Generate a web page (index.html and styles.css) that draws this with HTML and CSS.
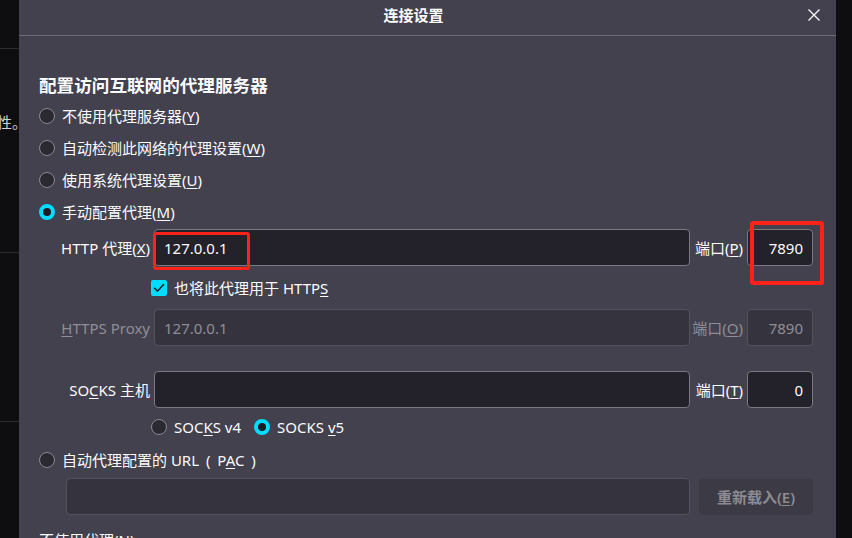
FILE: index.html
```html
<!DOCTYPE html>
<html lang="zh-CN">
<head>
<meta charset="utf-8">
<title>连接设置</title>
<link rel="stylesheet" href="styles.css">
</head>
<body>
<div class="page">
  <aside class="side side-left">
    <div class="seg seg-1"></div>
    <div class="seg seg-2"><span class="frag">保护您的隐私和安全性<span class="stop">。</span></span></div>
    <div class="seg seg-3"></div>
    <div class="seg seg-4"></div>
  </aside>

  <section class="dialog">
    <header class="dlg-head">
      <div class="dlg-title">连接设置</div>
      <div class="dlg-close">
        <svg width="12" height="12" viewBox="0 0 12 12"><path d="M0.5 0.5 L11.5 11.5 M11.5 0.5 L0.5 11.5" stroke="#fbfbfe" stroke-width="1.3" fill="none"/></svg>
      </div>
    </header>

    <main class="content">
      <h2 class="heading">配置访问互联网的代理服务器</h2>

      <div class="radio-row"><span class="radio"></span><span>不使用代理服务器(<u>Y</u>)</span></div>
      <div class="radio-row"><span class="radio"></span><span>自动检测此网络的代理设置(<u>W</u>)</span></div>
      <div class="radio-row"><span class="radio"></span><span>使用系统代理设置(<u>U</u>)</span></div>
      <div class="radio-row"><span class="radio checked"></span><span>手动配置代理(<u>M</u>)</span></div>

      <div class="frow frow-http">
        <span class="flabel">HTTP 代理(<u>X</u>)</span>
        <div class="field main-field"><span class="val">127.0.0.1</span></div>
        <span class="plabel">端口(<u>P</u>)</span>
        <div class="field port-field"><span class="val">7890</span></div>
      </div>

      <div class="check-row"><span class="checkbox"><svg width="16" height="16" viewBox="0 0 16 16"><path d="M3.6 8.2 L6.6 11.1 L12.6 4.6" stroke="#1c1b22" stroke-width="1.5" fill="none" stroke-linecap="round" stroke-linejoin="round"/></svg></span><span>也将此代理用于 HTTP<u>S</u></span></div>

      <div class="frow disabled">
        <span class="flabel"><u>H</u>TTPS Proxy</span>
        <div class="field main-field"><span class="val">127.0.0.1</span></div>
        <span class="plabel">端口(<u>O</u>)</span>
        <div class="field port-field"><span class="val">7890</span></div>
      </div>

      <div class="frow frow-socks">
        <span class="flabel">SO<u>C</u>KS 主机</span>
        <div class="field main-field"></div>
        <span class="plabel">端口(<u>T</u>)</span>
        <div class="field port-field"><span class="val">0</span></div>
      </div>

      <div class="ver-row">
        <span class="ver-opt"><span class="radio"></span><span>SOC<u>K</u>S v4</span></span>
        <span class="ver-opt"><span class="radio checked"></span><span>SOCKS <u>v</u>5</span></span>
      </div>

      <div class="radio-row pac-radio"><span class="radio"></span><span>自动代理配置的 <span class="pac-text">URL ( P<u>A</u>C )</span></span></div>

      <div class="pac-row disabled">
        <div class="field pac-field"></div>
        <div class="btn">重新载入(<u>E</u>)</div>
      </div>

      <div class="noproxy">不使用代理(<u>N</u>)</div>
    </main>
  </section>

  <aside class="side side-right"></aside>

  <div class="mark mark-1"></div>
  <div class="mark mark-2"></div>
</div>
</body>
</html>
```

FILE: styles.css
```css
* { box-sizing: border-box; }

html, body {
  margin: 0;
  padding: 0;
  background: #0e0e10;
}

body {
  font-family: "Noto Sans", "Noto Sans CJK SC", sans-serif;
  font-size: 15px;
  color: #fbfbfe;
}

u {
  text-decoration-thickness: 1px;
  text-underline-offset: 2px;
}

.page {
  position: relative;
  display: flex;
  width: 852px;
  height: 538px;
  overflow: hidden;
}

/* side strips */
.side {
  background: #0e0e10;
  flex: none;
  overflow: hidden;
}
.side-left { width: 19px; }
.side-right { width: 16px; }

.seg { border-bottom: 1px solid #2c2b31; }
.seg-1 { height: 49px; }
.seg-2 {
  height: 204px;
  display: flex;
  justify-content: flex-end;
  padding-top: 63px;
  padding-right: 1px;
  white-space: nowrap;
  color: #cfcfd6;
  line-height: 20px;
}
.stop {
  display: inline-block;
  width: 6px;
  overflow: visible;
}
.seg-3 { height: 169px; }
.seg-4 { border-bottom: 0; }

/* dialog */
.dialog {
  flex: 1;
  background: #42414d;
  display: flex;
  flex-direction: column;
}

.dlg-head {
  height: 36px;
  flex: none;
  display: flex;
  align-items: center;
  border-bottom: 1px solid #6e6d77;
  padding-bottom: 5px;
}
.dlg-title {
  flex: 1;
  text-align: center;
  font-weight: 600;
  font-size: 15px;
  line-height: 20px;
}
.dlg-close {
  width: 28px;
  flex: none;
  display: flex;
}

.content {
  padding: 37px 23px 0 20px;
}

.heading {
  margin: 0 0 3px;
  font-size: 17.6px;
  font-weight: 600;
  line-height: 24px;
}

.radio-row {
  height: 32px;
  display: flex;
  align-items: center;
  gap: 7px;
  line-height: 20px;
}

.radio {
  width: 16px;
  height: 16px;
  flex: none;
  border-radius: 50%;
  border: 1.5px solid #8b8a93;
  background: #2b2a33;
}
.radio.checked {
  border: 4.5px solid #00ddff;
  background: #1c1b22;
}

.pac-text { word-spacing: 3px; }

/* form rows */
.frow {
  display: grid;
  grid-template-columns: 111px 1fr 57px 66px;
  align-items: center;
  height: 37px;
  line-height: 20px;
}
.frow-http { margin-top: 1px; }
.frow-socks { margin-top: 25px; }

.flabel {
  text-align: right;
  white-space: nowrap;
}
.plabel {
  text-align: right;
  padding-right: 4px;
  white-space: nowrap;
}

.field {
  height: 37px;
  border: 1px solid #7a7982;
  border-radius: 4px;
  background: #23222b;
  display: flex;
  align-items: center;
}
.main-field {
  margin-left: 4px;
  padding-left: 9px;
}
.port-field {
  justify-content: flex-end;
  padding-right: 9px;
}

.disabled { color: #8f8e97; }
.disabled .field {
  background: #35343e;
  border-color: #54535c;
}

.check-row {
  height: 43px;
  display: flex;
  align-items: center;
  gap: 7px;
  padding-left: 112px;
  line-height: 20px;
}
.checkbox {
  width: 16px;
  height: 16px;
  flex: none;
  border-radius: 2px;
  background: #00ddff;
  display: flex;
}

.ver-row {
  height: 38px;
  display: flex;
  align-items: center;
  padding-left: 112px;
  gap: 13px;
  line-height: 20px;
}
.ver-opt {
  display: flex;
  align-items: center;
  gap: 7px;
}

.pac-radio { height: 28px; }

.pac-row {
  margin-top: 4px;
  display: flex;
  align-items: center;
  gap: 9px;
  padding-left: 27px;
}
.pac-field { flex: 1; }
.btn {
  width: 114px;
  height: 36px;
  border-radius: 4px;
  background: #3b3a45;
  display: flex;
  align-items: center;
  justify-content: center;
  color: #8c8b94;
  font-weight: 600;
}

.noproxy {
  margin-top: 15px;
  line-height: 20px;
}

/* red annotation boxes */
.mark {
  position: absolute;
  border: 3.5px solid #fe2218;
  border-radius: 3px;
}
.mark-1 { left: 153px; top: 232px; width: 97px; height: 38px; }
.mark-2 { left: 750px; top: 221px; width: 74px; height: 64px; border-width: 4px; }
```
